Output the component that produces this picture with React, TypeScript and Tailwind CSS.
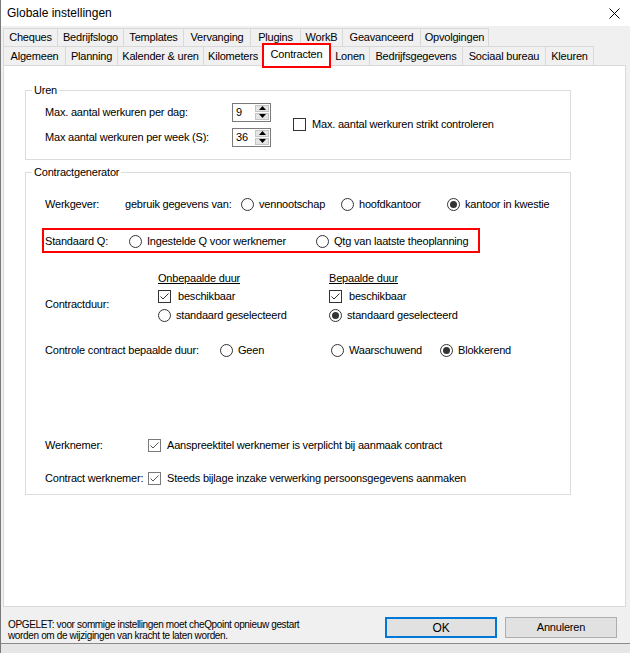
import React from 'react';

const font = { fontFamily: '"Liberation Sans", Arial, sans-serif' };

const row1 = [
  { label: 'Cheques', w: 'w-[55px]' },
  { label: 'Bedrijfslogo', w: 'w-[67px]' },
  { label: 'Templates', w: 'w-[61px]' },
  { label: 'Vervanging', w: 'w-[68px]' },
  { label: 'Plugins', w: 'w-[51px]' },
  { label: 'WorkB', w: 'w-[43px]' },
  { label: 'Geavanceerd', w: 'w-[79px]' },
  { label: 'Opvolgingen', w: 'w-[69px]' },
];

const row2 = [
  { label: 'Algemeen', w: 'w-[63px]' },
  { label: 'Planning', w: 'w-[53px]' },
  { label: 'Kalender & uren', w: 'w-[87px]' },
  { label: 'Kilometers', w: 'w-[60px]' },
  { label: 'Contracten', w: 'w-[69px]', active: true },
  { label: 'Lonen', w: 'w-[40px]' },
  { label: 'Bedrijfsgegevens', w: 'w-[94px]' },
  { label: 'Sociaal bureau', w: 'w-[84px]' },
  { label: 'Kleuren', w: 'w-[49px]' },
];

const Radio = ({ checked }: { checked?: boolean }) => (
  <span className="w-[13px] h-[13px] rounded-full border border-[#333333] bg-white flex items-center justify-center shrink-0">
    {checked && <span className="w-[7px] h-[7px] rounded-full bg-[#333333]" />}
  </span>
);

const Check = ({ checked, light }: { checked?: boolean; light?: boolean }) => (
  <span
    className={
      light
        ? 'w-[13px] h-[13px] border border-[#7a7a7a] bg-white flex items-center justify-center shrink-0'
        : 'w-[13px] h-[13px] border border-[#333333] bg-white flex items-center justify-center shrink-0'
    }
  >
    {checked && (
      <svg width="11" height="11" viewBox="0 0 11 11">
        <path d="M1.5 5.5 L4 8 L9.5 2.5" fill="none" stroke={light ? '#555' : '#333'} strokeWidth="1" />
      </svg>
    )}
  </span>
);

const Option = ({ label, checked, w }: { label: string; checked?: boolean; w?: string }) => (
  <div className={`flex items-center gap-[5px] ${w ?? ''}`}>
    <Radio checked={checked} />
    <span>{label}</span>
  </div>
);

const Spinner = ({ value }: { value: string }) => (
  <div className="w-[39px] h-[19px] border border-[#7a7a7a] bg-white flex">
    <span className="flex-1 pl-[3px] leading-[17px]">{value}</span>
    <div className="w-[15px] flex flex-col gap-px py-px pr-px">
      <div className="flex-1 bg-[#e5e5e5] border border-[#c4c4c4] flex items-center justify-center">
        <svg width="7" height="4" viewBox="0 0 7 4"><path d="M0 4 L3.5 0 L7 4 Z" fill="#000" /></svg>
      </div>
      <div className="flex-1 bg-[#e5e5e5] border border-[#c4c4c4] flex items-center justify-center">
        <svg width="7" height="4" viewBox="0 0 7 4"><path d="M0 0 L3.5 4 L7 0 Z" fill="#000" /></svg>
      </div>
    </div>
  </div>
);

export default function App() {
  return (
    <div
      style={font}
      className="w-[630px] h-[653px] bg-[#f0f0f0] border-l border-[#7a7a7a] text-[11px] tracking-[-0.2px] text-black flex flex-col overflow-hidden"
    >
      {/* title bar */}
      <div className="h-[26px] bg-white flex items-center justify-between pl-[6px] pr-[10px] shrink-0">
        <span className="text-[12px] tracking-normal">Globale instellingen</span>
        <svg width="11" height="11" viewBox="0 0 11 11">
          <path d="M0.5 0.5 L10.5 10.5 M10.5 0.5 L0.5 10.5" stroke="#000" strokeWidth="1" />
        </svg>
      </div>

      {/* tabs */}
      <div className="mt-[2px] ml-[2px] flex flex-col shrink-0">
        <div className="flex h-[18px]">
          {row1.map((t) => (
            <div
              key={t.label}
              className={`${t.w} -mr-px border border-b-0 border-[#d9d9d9] bg-[#f0f0f0] flex items-center justify-center leading-none`}
            >
              {t.label}
            </div>
          ))}
        </div>
        <div className="flex h-[19px] items-end">
          {row2.map((t) =>
            t.active ? (
              <div
                key={t.label}
                className={`${t.w} h-[25px] -mr-px -mb-[3px] relative z-10 border-2 border-[#ff0000] bg-white flex items-start justify-center pt-[4px] leading-none`}
              >
                {t.label}
              </div>
            ) : (
              <div
                key={t.label}
                className={`${t.w} h-[19px] -mr-px border border-b-0 border-[#d9d9d9] bg-[#f0f0f0] flex items-center justify-center leading-none`}
              >
                {t.label}
              </div>
            )
          )}
        </div>
      </div>

      {/* tab page */}
      <div className="ml-[2px] w-[623px] h-[542px] bg-white border border-[#d9d9d9] shrink-0 pt-[17px]">
        <fieldset className="ml-[21px] w-[546px] border border-[#dcdcdc] pl-[19px] pb-[12px]">
          <legend className="-ml-[13px] px-[2px] leading-[14px]">Uren</legend>
          <div className="flex items-center pt-[5px]">
            <div className="flex flex-col gap-[5px]">
              <div className="flex items-center h-[20px]">
                <span className="w-[187px]">Max. aantal werkuren per dag:</span>
                <Spinner value="9" />
              </div>
              <div className="flex items-center h-[20px]">
                <span className="w-[187px]">Max aantal werkuren per week (S):</span>
                <Spinner value="36" />
              </div>
            </div>
            <div className="flex items-center gap-[6px] ml-[22px]">
              <Check />
              <span>Max. aantal werkuren strikt controleren</span>
            </div>
          </div>
        </fieldset>

        <fieldset className="mt-[5px] ml-[21px] w-[546px] border border-[#dcdcdc] pl-[19px] pb-[6px]">
          <legend className="-ml-[13px] px-[2px] leading-[14px]">Contractgenerator</legend>

          <div className="flex items-center h-[20px] mt-[15px]">
            <span className="w-[80px]">Werkgever:</span>
            <span className="w-[116px]">gebruik gegevens van:</span>
            <Option label="vennootschap" w="w-[100px]" />
            <Option label="hoofdkantoor" w="w-[106px]" />
            <Option label="kantoor in kwestie" checked />
          </div>

          <div className="mt-[14px] -ml-[3px] w-[438px] h-[25px] border-2 border-[#ff0000] flex items-center pl-px pt-[2px]">
            <span className="w-[84px]">Standaard Q:</span>
            <Option label="Ingestelde Q voor werknemer" w="w-[187px]" />
            <Option label="Qtg van laatste theoplanning" />
          </div>

          <div className="flex mt-[17px]">
            <span className="w-[113px] pt-[26px]">Contractduur:</span>
            <div className="w-[171px] flex flex-col">
              <span className="h-[17px] underline leading-[17px]">Onbepaalde duur</span>
              <div className="h-[19px] flex items-center gap-[7px]">
                <Check checked />
                <span>beschikbaar</span>
              </div>
              <div className="h-[19px] flex items-center">
                <Option label="standaard geselecteerd" />
              </div>
            </div>
            <div className="flex flex-col">
              <span className="h-[17px] underline leading-[17px]">Bepaalde duur</span>
              <div className="h-[19px] flex items-center gap-[7px]">
                <Check checked />
                <span>beschikbaar</span>
              </div>
              <div className="h-[19px] flex items-center">
                <Option label="standaard geselecteerd" checked />
              </div>
            </div>
          </div>

          <div className="flex items-center h-[20px] mt-[15px]">
            <span className="w-[175px]">Controle contract bepaalde duur:</span>
            <Option label="Geen" w="w-[111px]" />
            <Option label="Waarschuwend" w="w-[109px]" />
            <Option label="Blokkerend" checked />
          </div>

          <div className="flex items-center h-[20px] mt-[75px]">
            <span className="w-[103px]">Werknemer:</span>
            <div className="flex items-center gap-[6px]">
              <Check checked light />
              <span>Aanspreektitel werknemer is verplicht bij aanmaak contract</span>
            </div>
          </div>

          <div className="flex items-center h-[20px] mt-[13px]">
            <span className="w-[103px]">Contract werknemer:</span>
            <div className="flex items-center gap-[6px]">
              <Check checked light />
              <span>Steeds bijlage inzake verwerking persoonsgegevens aanmaken</span>
            </div>
          </div>
        </fieldset>
      </div>

      {/* footer */}
      <div className="flex items-start pl-[7px] pr-[13px] pt-[10px] h-[36px] shrink-0">
        <p className="flex-1 text-[10px] tracking-[-0.35px] leading-[11px] pt-[2px]">
          OPGELET: voor sommige instellingen moet cheQpoint opnieuw gestart
          <br />
          worden om de wijzigingen van kracht te laten worden.
        </p>
        <div className="flex gap-[8px]">
          <button className="w-[112px] h-[21px] bg-[#e1e1e1] border-2 border-[#0078d7] text-[12px]">OK</button>
          <button className="w-[112px] h-[21px] bg-[#e1e1e1] border border-[#adadad] text-[11px]">Annuleren</button>
        </div>
      </div>
      <div className="flex-1 border-t border-[#8a8a8a] bg-[#e6e6e6]" />
    </div>
  );
}
